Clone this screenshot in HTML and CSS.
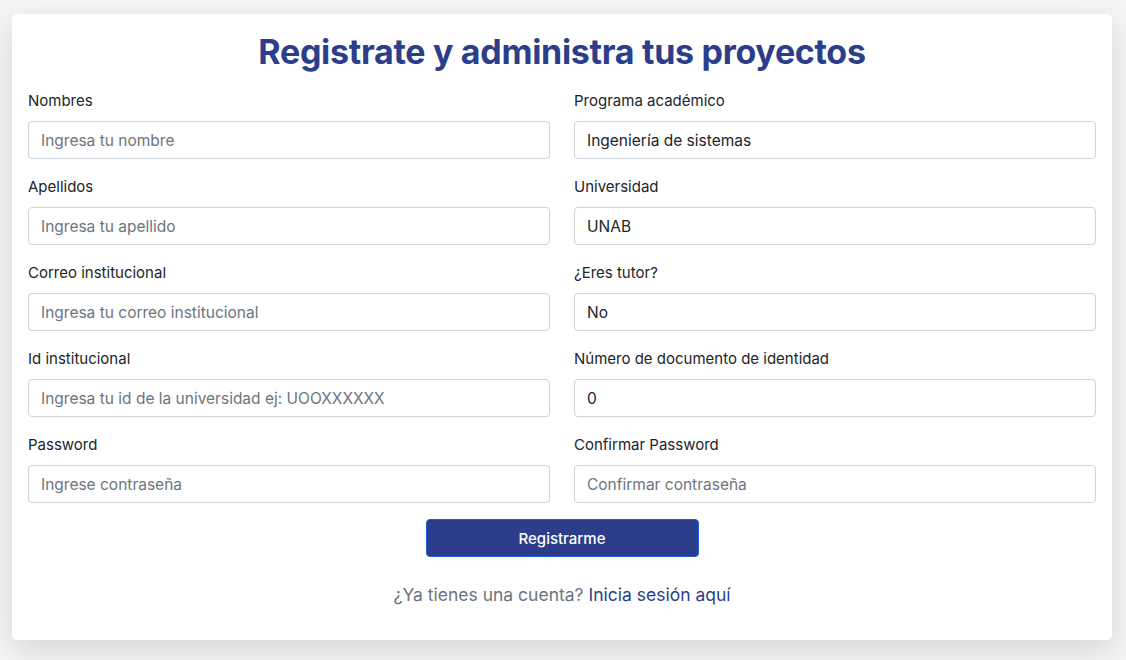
FILE: index.html
```html
<!DOCTYPE html>
<html lang="es">
<head>
<meta charset="utf-8">
<title>Registro</title>
<link rel="stylesheet" href="styles.css">
</head>
<body>
<main class="page">
  <section class="card">
    <h1 class="title">Registrate y administra tus proyectos</h1>
    <form class="form">
      <div class="grid">
        <div class="field">
          <label class="label">Nombres</label>
          <input class="input" type="text" placeholder="Ingresa tu nombre">
        </div>
        <div class="field">
          <label class="label">Programa académico</label>
          <input class="input" type="text" value="Ingeniería de sistemas">
        </div>
        <div class="field">
          <label class="label">Apellidos</label>
          <input class="input" type="text" placeholder="Ingresa tu apellido">
        </div>
        <div class="field">
          <label class="label">Universidad</label>
          <input class="input" type="text" value="UNAB">
        </div>
        <div class="field">
          <label class="label">Correo institucional</label>
          <input class="input" type="text" placeholder="Ingresa tu correo institucional">
        </div>
        <div class="field">
          <label class="label">¿Eres tutor?</label>
          <input class="input" type="text" value="No">
        </div>
        <div class="field">
          <label class="label">Id institucional</label>
          <input class="input" type="text" placeholder="Ingresa tu id de la universidad ej: UOOXXXXXX">
        </div>
        <div class="field">
          <label class="label">Número de documento de identidad</label>
          <input class="input" type="text" value="0">
        </div>
        <div class="field">
          <label class="label">Password</label>
          <input class="input" type="password" placeholder="Ingrese contraseña">
        </div>
        <div class="field">
          <label class="label">Confirmar Password</label>
          <input class="input" type="password" placeholder="Confirmar contraseña">
        </div>
      </div>
      <div class="actions">
        <button class="btn" type="button">Registrarme</button>
      </div>
    </form>
    <p class="footer">¿Ya tienes una cuenta? <a class="link" href="#">Inicia sesión aquí</a></p>
  </section>
</main>
</body>
</html>
```
FILE: styles.css
```css
* { box-sizing: border-box; }
html, body { margin: 0; padding: 0; }
body {
  background: #f4f4f4;
  font-family: "Inter", "Open Sans", sans-serif;
  color: #212529;
  width: 1126px;
  height: 660px;
  overflow: hidden;
}
.page {
  padding: 14px 14px 0 12px;
}
.card {
  background: #fff;
  border-radius: 5px;
  box-shadow: 0 10px 30px rgba(0,0,0,0.12);
  padding: 14px 16px 29px;
  height: 626px;
}
.title {
  margin: 0 0 13px;
  text-align: center;
  font-size: 34px;
  font-weight: 700;
  color: #2c3e8b;
  line-height: 48px;
  letter-spacing: -0.3px;
}
.grid {
  display: grid;
  grid-template-columns: 1fr 1fr;
  column-gap: 24px;
}
.field {
  display: flex;
  flex-direction: column;
  margin-bottom: 16px;
}
.label {
  font-size: 15px;
  line-height: 24px;
  margin-bottom: 8px;
  color: #212529;
}
.input {
  height: 38px;
  border: 1px solid #ced4da;
  border-radius: 4px;
  padding: 0 12px;
  font-family: inherit;
  font-size: 15.5px;
  color: #212529;
  background: #fff;
}
.input::placeholder { color: #6c757d; }
.actions {
  display: flex;
  justify-content: center;
}
.btn {
  width: 273px;
  height: 38px;
  background: #2c3e8b;
  border: 1px solid #1d5fd6;
  border-radius: 4px;
  color: #fff;
  font-family: inherit;
  font-size: 15px;
  font-weight: 500;
}
.footer {
  margin: 27px 0 0;
  text-align: center;
  font-size: 17.5px;
  color: #6c757d;
}
.link {
  color: #2c3e8b;
  text-decoration: none;
}
```
